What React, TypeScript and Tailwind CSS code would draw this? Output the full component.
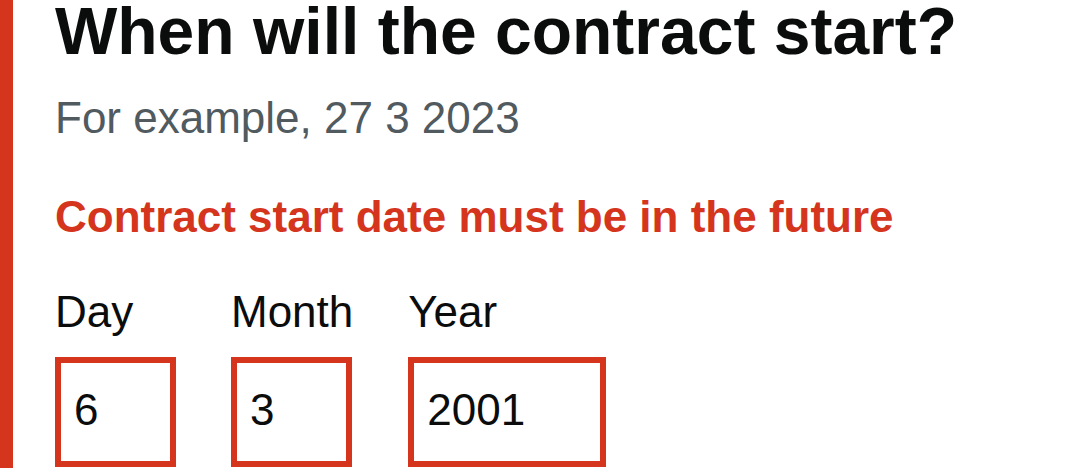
import React from 'react';

const fields = [
  { id: 'day', label: 'Day', value: '6', width: 'w-[121px]' },
  { id: 'month', label: 'Month', value: '3', width: 'w-[121px]' },
  { id: 'year', label: 'Year', value: '2001', width: 'w-[198px]' },
];

export default function App() {
  return (
    <div className="h-[468px] w-[1081px] overflow-hidden bg-white font-['Liberation_Sans',Arial,sans-serif] text-[#0b0c0c]">
      {/* error group: red bar on the left */}
      <div className="h-full border-l-[13px] border-[#d4351c] pl-[42px]">
        <h1 className="text-[66px] leading-[62px] font-bold whitespace-nowrap">When will the contract start?</h1>
        <p className="mt-[31px] text-[44px] leading-[50px] text-[#505a5f]">For example, 27 3 2023</p>
        <p className="mt-[49px] text-[44px] leading-[50px] font-bold text-[#d4351c]">
          Contract start date must be in the future
        </p>

        <div className="mt-[46px] flex gap-[55px]">
          {fields.map((f) => (
            <div key={f.id} className="flex flex-col">
              <label htmlFor={f.id} className="text-[44px] leading-[48px]">
                {f.label}
              </label>
              <input
                id={f.id}
                readOnly
                value={f.value}
                className={`${f.width} mt-[21px] h-[110px] border-[6px] border-[#d4351c] bg-white px-[13px] pt-[22px] pb-[26px] text-[44px] leading-[50px] text-[#0b0c0c] outline-none`}
              />
            </div>
          ))}
        </div>
      </div>
    </div>
  );
}
